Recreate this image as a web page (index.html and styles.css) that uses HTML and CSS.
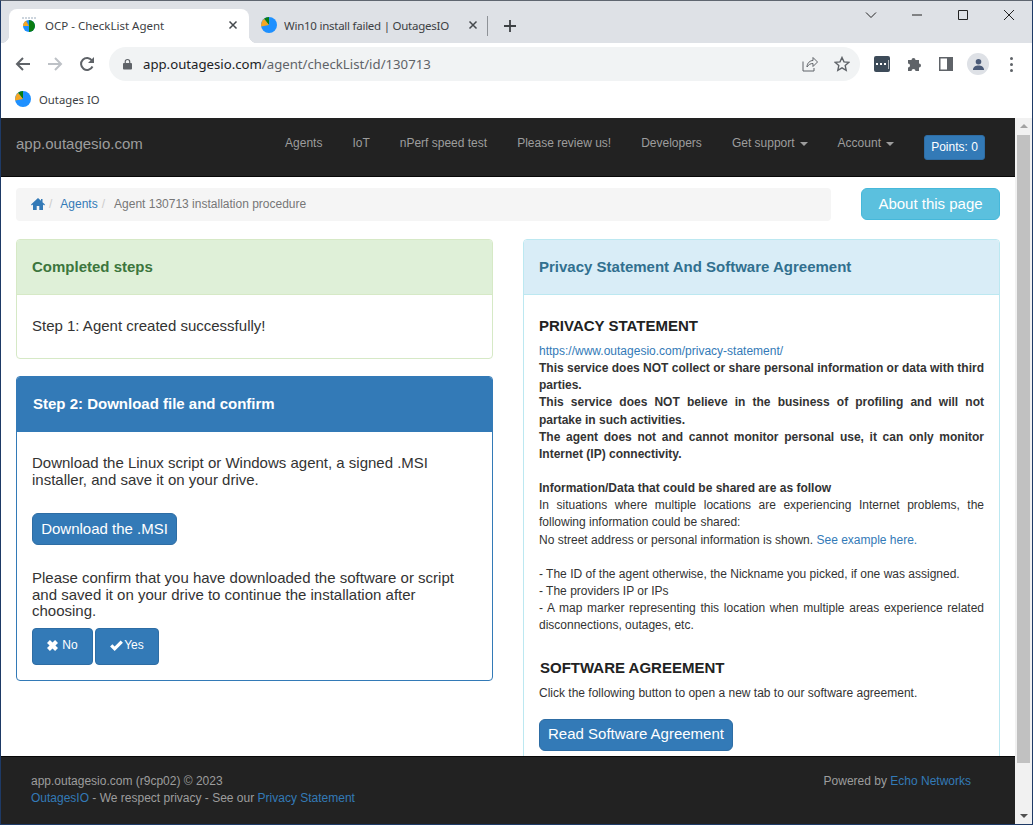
FILE: index.html
```html
<!DOCTYPE html>
<html lang="en">
	<head>
		<meta charset="UTF-8" />
		<title>OCP - CheckList Agent</title>
		<link rel="stylesheet" href="styles.css">
	</head>
	<body>
		<div class="window">
			<!-- browser chrome -->
			<div class="tabstrip">
				<div class="tab tab-active">
					<svg class="favicon" viewBox="0 0 16 16">
						<path d="M1 1h14" stroke="#9ab" stroke-width="1" stroke-dasharray="2 1" />
						<circle cx="8" cy="9" r="6" fill="#1e90ff" />
						<path d="M8 9V3a6 6 0 0 1 0 12z" fill="#0a7d12" />
						<path d="M8 9H2a6 6 0 0 1 3-5.200z" fill="#f5a623" />
					</svg>
					<span class="tab-title">OCP - CheckList Agent</span>
					<svg class="tab-x" viewBox="0 0 10 10"><path d="M1.500 1.500l7 7M8.500 1.500l-7 7" /></svg>
				</div>
				<div class="tab tab-idle">
					<svg class="favicon" viewBox="0 0 16 16">
						<circle cx="8" cy="8" r="8" fill="#1e90ff" />
						<path d="M8 8L3 1.800A8 8 0 0 1 8 0z" fill="#0a7d12" />
						<path d="M8 8L.2 9.500A8 8 0 0 1 3 1.800z" fill="#f5a623" />
					</svg>
					<span class="tab-title">Win10 install failed | OutagesIO</span>
					<svg class="tab-x" viewBox="0 0 10 10"><path d="M1.500 1.500l7 7M8.500 1.500l-7 7" /></svg>
				</div>
				<div class="tab-sep"></div>
				<svg class="tab-new" viewBox="0 0 12 12"><path d="M6 0v12M0 6h12" /></svg>
				<div class="win-controls">
					<svg viewBox="0 0 12 12"><path d="M1 3.500l5 5 5-5" /></svg>
					<svg viewBox="0 0 12 12"><path d="M1 6h10" /></svg>
					<svg viewBox="0 0 12 12"><path d="M1.500 1.500h9v9h-9z" /></svg>
					<svg viewBox="0 0 12 12"><path d="M1 1l10 10M11 1L1 11" /></svg>
				</div>
			</div>
			<div class="toolbar">
				<svg class="tool" viewBox="0 0 16 16"><path class="ln" d="M15 8H2M8 2L2 8l6 6" /></svg>
				<svg class="tool tool-off" viewBox="0 0 16 16"><path class="ln" d="M1 8h13M8 2l6 6-6 6" /></svg>
				<svg class="tool" viewBox="0 0 16 16"><path class="ln" d="M13.500 10.500A6 6 0 1 1 13 4.500" /><path class="fl" d="M15 1v6H9z" /></svg>
				<div class="omnibox">
					<svg class="lock" viewBox="0 0 10 12"><path class="fl" d="M1 5h8a1 1 0 0 1 1 1v5a1 1 0 0 1-1 1H1a1 1 0 0 1-1-1V6a1 1 0 0 1 1-1z" /><path d="M2.500 5V3.500a2.500 2.500 0 0 1 5 0V5" fill="none" stroke="#5f6368" stroke-width="1.300" /></svg>
					<span class="url"><b>app.outagesio.com</b>/agent/checkList/id/130713</span>
					<svg class="omni-icon" viewBox="0 0 16 16"><path d="M1 5.500V15h11v-3M5 11c0-4 3-6.500 6-6.500V1.500l4.500 4.500L11 10.500V7.500c-2.500 0-4.500 1-6 3.500z" fill="none" stroke="#5f6368" stroke-width="1" /></svg>
					<svg class="omni-icon" viewBox="0 0 16 16"><path d="M8 1.500l2 4.400 4.700.5-3.500 3.200 1 4.700L8 11.900l-4.200 2.400 1-4.700L1.300 6.400 6 5.900z" fill="none" stroke="#5f6368" stroke-width="1.400" /></svg>
				</div>
				<div class="ext-icons">
					<div class="ext-dark"><i></i><i></i><i></i><i class="ext-bar"></i></div>
					<svg class="ext" viewBox="0 0 16 16"><path class="fl" d="M1 4h3.500a2 2 0 0 1 4 0H12v3.500a2 2 0 0 1 0 4V15H8.500a2 2 0 0 0-4 0H1v-3.500a2 2 0 0 0 0-4z" /></svg>
					<svg class="ext" viewBox="0 0 14 14"><path class="fl" fill-rule="evenodd" d="M0 0h14v14H0zM1.500 1.500v11H8v-11z" /></svg>
					<div class="avatar">
						<svg viewBox="0 0 14 14"><circle cx="7" cy="4" r="3" fill="#4a5a78" /><path d="M1 13c0-3.500 3-5 6-5s6 1.500 6 5z" fill="#4a5a78" /></svg>
					</div>
					<div class="kebab"><i></i><i></i><i></i></div>
				</div>
			</div>
			<div class="bookmarks">
				<svg class="favicon" viewBox="0 0 16 16">
					<circle cx="8" cy="8" r="8" fill="#1e90ff" />
					<path d="M8 8L3 1.800A8 8 0 0 1 8 0z" fill="#0a7d12" />
					<path d="M8 8L.2 9.500A8 8 0 0 1 3 1.800z" fill="#f5a623" />
				</svg>
				<span class="bm-title">Outages IO</span>
			</div>

			<!-- page -->
			<div class="viewport">
				<div class="page">
					<nav class="navbar">
						<a class="brand">app.outagesio.com</a>
						<div class="nav-links">
							<a>Agents</a>
							<a>IoT</a>
							<a>nPerf speed test</a>
							<a>Please review us!</a>
							<a>Developers</a>
							<a>Get support <span class="caret"></span></a>
							<a>Account <span class="caret"></span></a>
							<button class="btn-points">Points: 0</button>
						</div>
					</nav>
					<div class="content">
						<div class="top-row">
							<ol class="breadcrumb">
								<li><svg class="home" viewBox="0 0 14 12"><path d="M7 0L0 6.500l.8.9L2 6.400V12h3.700V8h2.600v4H12V6.400l1.200 1 .8-.9L11.500 4.200V1H10v1.800z" /></svg></li>
								<li class="sep">/</li>
								<li><a>Agents</a></li>
								<li class="sep">/</li>
								<li class="current">Agent 130713 installation procedure</li>
							</ol>
							<button class="btn-info">About this page</button>
						</div>
						<div class="columns">
							<div class="col">
								<div class="panel panel-success">
									<div class="panel-heading">Completed steps</div>
									<div class="panel-body">Step 1: Agent created successfully!</div>
								</div>
								<div class="panel panel-primary">
									<div class="panel-heading">Step 2: Download file and confirm</div>
									<div class="panel-body">
										<p class="p-dl">Download the Linux script or Windows agent, a signed .MSI installer, and save it on your drive.</p>
										<button class="btn btn-msi">Download the .MSI</button>
										<p class="p-confirm">Please confirm that you have downloaded the software or script and saved it on your drive to continue the installation after choosing.</p>
										<div class="btn-row">
											<button class="btn btn-small">
												<svg class="ico" viewBox="0 0 12 12"><path d="M3.200 0L6 2.800 8.800 0 12 3.200 9.200 6 12 8.800 8.800 12 6 9.200 3.200 12 0 8.800 2.800 6 0 3.200z" /></svg>
												No
											</button>
											<button class="btn btn-small">
												<svg class="ico ico-check" viewBox="0 0 14 12"><path d="M5 12L0 7l2.500-2.500L5 7l6.500-6.500L14 3z" /></svg>Yes
											</button>
										</div>
									</div>
								</div>
							</div>
							<div class="col">
								<div class="panel panel-info">
									<div class="panel-heading">Privacy Statement And Software Agreement</div>
									<div class="panel-body legal">
										<h4>PRIVACY STATEMENT</h4>
										<p><a>https://www.outagesio.com/privacy-statement/</a></p>
										<p><b>This service does NOT collect or share personal information or data with third parties.</b></p>
										<p><b>This service does NOT believe in the business of profiling and will not partake in such activities.</b></p>
										<p class="gap"><b>The agent does not and cannot monitor personal use, it can only monitor Internet (IP) connectivity.</b></p>
										<p><b>Information/Data that could be shared are as follow</b></p>
										<p>In situations where multiple locations are experiencing Internet problems, the following information could be shared:</p>
										<p class="gap">No street address or personal information is shown. <a>See example here.</a></p>
										<p>- The ID of the agent otherwise, the Nickname you picked, if one was assigned.</p>
										<p>- The providers IP or IPs</p>
										<p>- A map marker representing this location when multiple areas experience related disconnections, outages, etc.</p>
										<h4 class="h-agreement">SOFTWARE AGREEMENT</h4>
										<p class="p-click">Click the following button to open a new tab to our software agreement.</p>
										<button class="btn btn-read">Read Software Agreement</button>
									</div>
								</div>
							</div>
						</div>
					</div>
					<footer class="footer">
						<div>
							<div>app.outagesio.com (r9cp02) © 2023</div>
							<div class="foot-2"><a>OutagesIO</a> - We respect privacy - See our <a>Privacy Statement</a></div>
						</div>
						<div>Powered by <a>Echo Networks</a></div>
					</footer>
				</div>
				<div class="scrollbar">
					<span class="arrow-up"></span>
					<div class="thumb"></div>
					<span class="arrow-down"></span>
				</div>
			</div>
		</div>
	</body>
</html>
```

FILE: styles.css
```css
* {
	box-sizing: border-box;
}

html,
body {
	height: 100%;
}

body {
	margin: 0;
	overflow: hidden;
	font-family: 'Liberation Sans', Arial, sans-serif;
	color: #333;
	background: #fff;
}

a {
	color: #337ab7;
	text-decoration: none;
}

button {
	font-family: inherit;
	cursor: pointer;
}

.window {
	display: flex;
	flex-direction: column;
	height: 825px;
	border: 1px solid #1e3a66;
	border-top-color: #5f6670;
}

/* chrome */
.tabstrip {
	display: flex;
	align-items: flex-end;
	flex: none;
	height: 42px;
	padding-left: 8px;
	background: #dee1e6;
	font-family: 'Noto Sans', sans-serif;
	font-size: 11.500px;
}

.tab {
	position: relative;
	display: flex;
	align-items: center;
	width: 240px;
	height: 34px;
	padding: 0 8px 2px 12px;
	color: #3c4043;
}

.tab-active {
	background: #fff;
	border-radius: 8px 8px 0 0;
}

.tab-idle .tab-title {
	margin-left: 7px;
	letter-spacing: -0.250px;
}

/* small curves where the active tab meets the toolbar */
.tab-active::before,
.tab-active::after {
	content: '';
	position: absolute;
	bottom: 0;
	width: 8px;
	height: 8px;
}

.tab-active::before {
	left: -8px;
	background: radial-gradient(circle at 0 0, #dee1e6 8px, #fff 8.500px);
}

.tab-active::after {
	right: -8px;
	background: radial-gradient(circle at 100% 0, #dee1e6 8px, #fff 8.500px);
}

.favicon {
	flex: none;
	width: 16px;
	height: 16px;
}

.tab-title {
	flex: 1;
	margin-left: 8px;
	white-space: nowrap;
	overflow: hidden;
}

.tab-x {
	flex: none;
	width: 10px;
	height: 10px;
	margin-right: 3px;
	fill: none;
	stroke: #45494d;
	stroke-width: 1.500;
}

.tab-sep {
	width: 1px;
	height: 20px;
	margin: 0 0 7px -2px;
	background: #8e9297;
}

.tab-new {
	width: 12px;
	height: 12px;
	margin: 0 0 11px 16px;
	fill: none;
	stroke: #3c4043;
	stroke-width: 1.800;
}

.win-controls {
	display: flex;
	gap: 34px;
	align-self: flex-start;
	margin: 8px 17px 0 auto;
}

.win-controls svg {
	width: 12px;
	height: 12px;
	fill: none;
	stroke: #222;
	stroke-width: 1;
}

.toolbar {
	display: flex;
	align-items: center;
	flex: none;
	height: 42px;
	padding-left: 14px;
	background: #fff;
}

.tool {
	width: 16px;
	height: 16px;
	margin-right: 16px;
}

.ln {
	fill: none;
	stroke: #5f6368;
	stroke-width: 2;
}

.fl {
	fill: #5f6368;
}

.tool-off .ln {
	stroke: #bdc1c6;
}

.omnibox {
	display: flex;
	align-items: center;
	width: 751px;
	height: 34px;
	margin-left: -2px;
	padding: 0 10px 0 14px;
	border-radius: 17px;
	background: #f1f3f4;
}

.lock {
	width: 9px;
	height: 12px;
}

.url {
	flex: 1;
	margin-left: 11px;
	font-family: 'Noto Sans', sans-serif;
	font-size: 13.200px;
	color: #5f6368;
}

.url b {
	font-weight: 400;
	color: #202124;
}

.omni-icon {
	width: 16px;
	height: 16px;
	margin-left: 16px;
}

.ext-icons {
	display: flex;
	align-items: center;
	margin-left: 14px;
}

.ext-dark {
	display: flex;
	align-items: center;
	justify-content: center;
	gap: 1.500px;
	width: 16px;
	height: 16px;
	border-radius: 2px;
	background: #3d4b59;
}

.ext-dark i {
	width: 2.500px;
	height: 2.500px;
	background: #fff;
}

.ext-dark .ext-bar {
	width: 1px;
	height: 9px;
	opacity: 0.600;
}

.ext {
	width: 16px;
	height: 16px;
	margin-left: 17px;
}

.ext + .ext {
	width: 14px;
	height: 14px;
	margin-left: 16px;
}

.avatar {
	display: flex;
	align-items: center;
	justify-content: center;
	width: 22px;
	height: 22px;
	margin-left: 14px;
	border-radius: 50%;
	background: #dee1e6;
}

.avatar svg {
	width: 13px;
	height: 13px;
}

.kebab {
	display: flex;
	flex-direction: column;
	gap: 3px;
	margin-left: 21px;
}

.kebab i {
	width: 3px;
	height: 3px;
	border-radius: 50%;
	background: #5f6368;
}

.bookmarks {
	display: flex;
	align-items: center;
	flex: none;
	height: 33px;
	padding: 0 0 5px 14px;
	background: #fff;
	font-family: 'Noto Sans', sans-serif;
	font-size: 11.300px;
	color: #3c4043;
}

.bm-title {
	margin-left: 8px;
}

/* page */
.viewport {
	display: flex;
	flex: 1;
	min-height: 0;
}

.page {
	display: flex;
	flex-direction: column;
	flex: 1;
	min-width: 0;
}

.navbar {
	display: flex;
	align-items: center;
	justify-content: space-between;
	flex: none;
	height: 59px;
	padding: 0 30px 0 15px;
	background: #222;
	border-bottom: 1px solid #080808;
}

.brand {
	margin-top: -8px;
	font-size: 15px;
	color: #9d9d9d;
}

.nav-links {
	display: flex;
	align-items: center;
	gap: 30px;
	font-size: 12px;
}

.nav-links a {
	margin-top: -8px;
	color: #9d9d9d;
}

.caret {
	display: inline-block;
	margin-left: 1.700px;
	vertical-align: middle;
	border-top: 4px solid #9d9d9d;
	border-left: 4px solid transparent;
	border-right: 4px solid transparent;
}

.btn-points {
	width: 61px;
	height: 25px;
	padding: 0;
	border: 1px solid #2e6da4;
	border-radius: 3px;
	background: #337ab7;
	color: #fff;
	font-size: 12px;
}

.content {
	flex: 1;
	min-height: 0;
	overflow: hidden;
	padding: 11px 15px 0;
}

.top-row {
	display: flex;
	justify-content: space-between;
}

.breadcrumb {
	display: flex;
	align-items: center;
	width: 815px;
	height: 33px;
	margin: 0;
	padding: 0 15px 2px;
	list-style: none;
	border-radius: 4px;
	background: #f5f5f5;
	font-size: 12px;
	color: #777;
}

.home {
	display: block;
	width: 14px;
	height: 12px;
	fill: #337ab7;
}

.sep {
	padding: 0 8px 0 4px;
	color: #ccc;
}

.current {
	padding-left: 1px;
}

.btn-info {
	width: 139px;
	height: 32px;
	padding: 0 0 2px;
	border: 1px solid #46b8da;
	border-radius: 6px;
	background: #5bc0de;
	color: #fff;
	font-size: 15px;
}

.columns {
	display: grid;
	grid-template-columns: 477px 477px;
	gap: 30px;
	margin-top: 18px;
}

.panel {
	margin-bottom: 17px;
	border: 1px solid #ddd;
	border-radius: 4px;
	background: #fff;
}

.panel-heading {
	height: 55px;
	padding: 0 15px;
	line-height: 54px;
	font-size: 15px;
	font-weight: 700;
	border-bottom: 1px solid transparent;
	border-radius: 3px 3px 0 0;
}

.panel-body {
	padding: 15px;
	font-size: 15px;
	line-height: 16.500px;
}

.panel-success {
	border-color: #d6e9c6;
}

.panel-success .panel-heading {
	background: #dff0d8;
	border-bottom-color: #d6e9c6;
	color: #3c763d;
}

.panel-success .panel-body {
	height: 63px;
	padding-top: 23px;
}

.panel-primary {
	height: 305px;
	border-color: #337ab7;
}

.panel-primary .panel-heading {
	padding-left: 16px;
	background: #337ab7;
	color: #fff;
}

.panel-primary .panel-body {
	padding-top: 23px;
}

.panel-info {
	border-color: #bce8f1;
}

.panel-info .panel-heading {
	background: #d9edf7;
	border-bottom-color: #bce8f1;
	color: #31708f;
}

.p-dl {
	margin: 0 0 25px;
}

.btn {
	border: 1px solid #2e6da4;
	border-radius: 6px;
	background: #337ab7;
	color: #fff;
	padding: 0 0 2px;
}

.btn-msi {
	display: block;
	width: 145px;
	height: 32px;
	font-size: 15px;
}

.p-confirm {
	margin: 25px 0 8px;
}

.btn-row {
	display: flex;
	gap: 2px;
}

.btn-small {
	display: flex;
	align-items: center;
	justify-content: center;
	height: 37px;
	border-radius: 4px;
	font-size: 12px;
	width: 61px;
}

.btn-small + .btn-small {
	width: 64px;
}

.ico {
	width: 11px;
	height: 11px;
	margin-right: 4px;
	fill: #fff;
}

.ico-check {
	width: 13px;
	margin-right: 1px;
}

.legal {
	height: 520px;
	padding-top: 23px;
	font-size: 12px;
	line-height: 17.140px;
	text-align: justify;
}

.legal p {
	margin: 0;
}

.legal .gap {
	margin-bottom: 17.140px;
}

.legal h4 {
	margin: 0 0 9px;
	font-size: 15px;
	line-height: 16px;
	color: #222;
}

.legal .h-agreement {
	margin: 26px 0 9px 1px;
}

.legal .p-click {
	margin-bottom: 16px;
}

.btn-read {
	display: block;
	width: 194px;
	height: 32px;
	font-size: 15px;
}

.footer {
	display: flex;
	justify-content: space-between;
	flex: none;
	height: 68px;
	padding: 17px 44px 0 30px;
	background: #222;
	border-top: 1px solid #080808;
	font-size: 12px;
	line-height: 14px;
	color: #9d9d9d;
}

.foot-2 {
	margin-top: 3px;
}

.scrollbar {
	display: flex;
	flex-direction: column;
	align-items: center;
	flex: none;
	width: 17px;
	background: #f1f1f1;
}

.arrow-up,
.arrow-down {
	flex: none;
	width: 0;
	margin: 6px 0;
	border-left: 4px solid transparent;
	border-right: 4px solid transparent;
}

.arrow-up {
	border-bottom: 4px solid #a3a3a3;
}

.arrow-down {
	margin-top: auto;
	border-top: 4px solid #505050;
}

.thumb {
	width: 13px;
	height: 628px;
	margin-top: 1px;
	background: #c1c1c1;
}
```
